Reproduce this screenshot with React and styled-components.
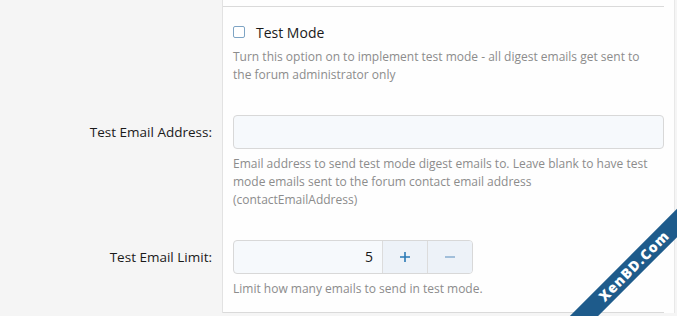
import styled, { createGlobalStyle } from "styled-components"

const GlobalStyle = createGlobalStyle`
  html, body {
    margin: 0;
    padding: 0;
    background: #f5f5f5;
  }
  body {
    font-family: "Segoe UI", "Open Sans", "Noto Sans", Arial, sans-serif;
  }
`

const Page = styled.div`
  position: relative;
  width: 677px;
  height: 316px;
  overflow: hidden;
  background: #f5f5f5;
`

const Form = styled.div`
  width: 675px;
  display: flex;
  flex-direction: column;
`

const Row = styled.div`
  display: grid;
  grid-template-columns: 222px 1fr;
`

const Label = styled.div`
  padding: ${props => props.top || "0"} 10px 0 0;
  text-align: right;
  font-size: 13.5px;
  color: #1a1a1a;
  line-height: 34px;
`

const Control = styled.div`
  background: #fefefe;
  border-left: 1px solid #e2e2e2;
  border-right: 1px solid #e8e8e8;
  padding: ${props => props.top || "0"} 10px ${props => props.bottom || "0"} 10px;
`

const Rule = styled.div`
  height: ${props => props.offset || "6px"};
  border-bottom: 1px solid #dadada;
  margin-left: -10px;
`

const CheckLine = styled.label`
  display: flex;
  align-items: center;
  gap: 11px;
  height: 20px;
  font-size: 14px;
  color: #1a1a1a;
`

const Box = styled.span`
  width: 10px;
  height: 10px;
  border: 1.5px solid #7ea4c4;
  border-radius: 2px;
  background: #fff;
`

const Hint = styled.div`
  max-width: 417px;
  margin-top: 6px;
  font-size: 12px;
  line-height: 18px;
  color: #8c8c8c;
`

const TextInput = styled.div`
  height: 32px;
  border: 1px solid #d8d8d8;
  border-radius: 4px;
  background: #f6f9fc;
`

const Spinner = styled.div`
  display: flex;
  width: 238px;
  height: 32px;
  border: 1px solid #d8d8d8;
  border-radius: 4px;
  background: #f6f9fc;
  overflow: hidden;
`

const Value = styled.div`
  flex: 1;
  text-align: right;
  padding-right: 9px;
  line-height: 32px;
  font-size: 14px;
  color: #1a1a1a;
`

const StepButton = styled.div`
  width: 44px;
  display: flex;
  align-items: center;
  justify-content: center;
  border-left: 1px solid #dcdcdc;
  background: #edf2f8;
  color: ${props => (props.muted ? "#8fb2d3" : "#2a79b5")};
`

const Ribbon = styled.div`
  position: absolute;
  left: 524px;
  top: 256px;
  width: 220px;
  height: 20px;
  transform: rotate(-45deg);
  background: #1e5b8b;
  color: #fff;
  font-family: "Open Sans", "DejaVu Sans", sans-serif;
  font-weight: 800;
  font-size: 14px;
  letter-spacing: 1px;
  line-height: 20px;
  text-align: center;
`

const Plus = () => (
  <svg width="12" height="12" viewBox="0 0 12 12">
    <path d="M6 1v10M1 6h10" stroke="currentColor" strokeWidth="1.6" />
  </svg>
)

const Minus = () => (
  <svg width="12" height="12" viewBox="0 0 12 12">
    <path d="M1 6h10" stroke="currentColor" strokeWidth="1.6" />
  </svg>
)

const App = () => {
  return (
    <Page>
      <GlobalStyle />
      <Form>
        <Row>
          <Label />
          <Control>
            <Rule />
          </Control>
        </Row>
        <Row>
          <Label />
          <Control top="15px" bottom="15px">
            <CheckLine>
              <Box />
              Test Mode
            </CheckLine>
            <Hint>
              Turn this option on to implement test mode - all digest emails get sent to the forum administrator only
            </Hint>
          </Control>
        </Row>
        <Row>
          <Label top="16px">Test Email Address:</Label>
          <Control top="16px" bottom="15px">
            <TextInput />
            <Hint>
              Email address to send test mode digest emails to. Leave blank to have test mode emails sent to the forum contact email address (contactEmailAddress)
            </Hint>
          </Control>
        </Row>
        <Row>
          <Label top="16px">Test Email Limit:</Label>
          <Control top="16px" bottom="14px">
            <Spinner>
              <Value>5</Value>
              <StepButton><Plus /></StepButton>
              <StepButton muted><Minus /></StepButton>
            </Spinner>
            <Hint>Limit how many emails to send in test mode.</Hint>
          </Control>
        </Row>
        <Row>
          <Label />
          <Control>
            <Rule offset="0px" />
          </Control>
        </Row>
      </Form>
      <Ribbon>XenBD.Com</Ribbon>
    </Page>
  )
}

export default App
